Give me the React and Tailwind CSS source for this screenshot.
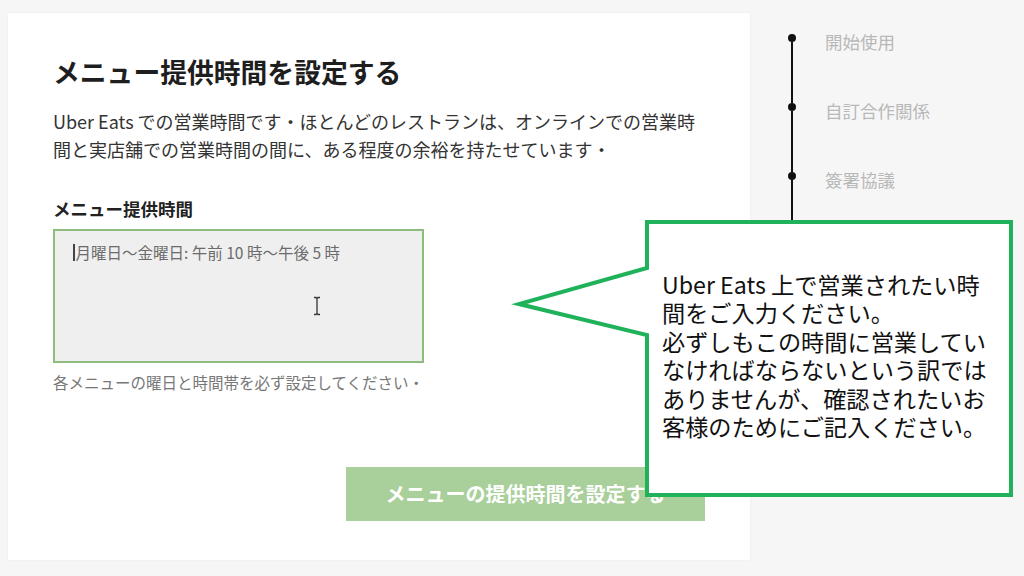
import React from "react";

const JP = { fontFamily: '"Noto Sans CJK JP", "Noto Sans", sans-serif' };

function Step({ label }) {
  return (
    <div className="flex h-[69px]">
      <div className="flex w-[12px] flex-col items-center">
        <div className="h-[8px] w-[8px] rounded-full bg-[#111]" />
        <div className="w-[2.5px] flex-1 bg-[#111]" />
      </div>
      {label ? (
        <div className="-mt-[4px] ml-[27px] text-[17.5px] leading-[24px] text-[#b8b8b8]">{label}</div>
      ) : null}
    </div>
  );
}

export default function App() {
  return (
    <div className="relative h-[576px] w-[1024px] overflow-hidden bg-[#f6f6f6]" style={JP}>
      <div className="flex pl-[8px] pt-[13px]">
        {/* Card */}
        <div className="flex h-[547px] w-[742px] flex-col bg-white px-[45px] pt-[41px] shadow-[0_0_2px_rgba(0,0,0,0.06)]">
          <h1 className="text-[26.8px] font-bold leading-[36px] text-[#1e1e1e]">メニュー提供時間を設定する</h1>
          <p className="mt-[17px] text-[18px] leading-[28px] text-[#333]">
            Uber Eats での営業時間です・ほとんどのレストランは、オンラインでの営業時
            <br />
            間と実店舗での営業時間の間に、ある程度の余裕を持たせています・
          </p>
          <div className="mt-[34px] text-[17.5px] font-bold leading-[24px] text-[#222]">メニュー提供時間</div>
          <div className="relative mt-[8px] h-[134px] w-[371px] border-2 border-[#8dbd7e] bg-[#efefef] pl-[18px] pt-[10px]">
            <div className="flex items-center text-[15.5px] leading-[22px] text-[#6b6b6b]">
              <span className="mr-[1px] inline-block h-[17px] w-[1.5px] bg-[#444]" />
              月曜日～金曜日: 午前 10 時～午後 5 時
            </div>
            <svg className="absolute left-[257px] top-[65px]" width="10" height="20" viewBox="0 0 10 20">
              <path d="M2 1.5h2l1 1 1-1h2M5 2.5v15M2 18.5h2l1-1 1 1h2" stroke="#333" strokeWidth="1.3" fill="none" />
            </svg>
          </div>
          <div className="mt-[8px] text-[15.5px] leading-[22px] text-[#777]">各メニューの曜日と時間帯を必ず設定してください・</div>
          <div className="mt-[74px] flex justify-end">
            <div className="flex h-[54px] w-[359px] items-center justify-center bg-[#a9cf9b] text-[20px] font-bold text-white">
              メニューの提供時間を設定する
            </div>
          </div>
        </div>
        {/* Sidebar */}
        <div className="flex flex-col pl-[36px] pt-[21px]">
          <Step label="開始使用" />
          <Step label="自訂合作關係" />
          <Step label="簽署協議" />
          <Step label="" />
        </div>
      </div>

      {/* Callout overlay */}
      <svg className="pointer-events-none absolute left-0 top-0" width="1024" height="576" viewBox="0 0 1024 576">
        <polygon
          points="647,222 1011,222 1011,495 647,495 647,335 519,304 647,268"
          fill="#ffffff"
          stroke="#1fb25b"
          strokeWidth="4"
          strokeLinejoin="miter"
        />
      </svg>
      <div className="absolute left-[662px] top-[270px] text-[23.2px] leading-[28.4px] text-[#111]">
        Uber Eats 上で営業されたい時
        <br />
        間をご入力ください。
        <br />
        必ずしもこの時間に営業してい
        <br />
        なければならないという訳では
        <br />
        ありませんが、確認されたいお
        <br />
        客様のためにご記入ください。
      </div>
    </div>
  );
}
